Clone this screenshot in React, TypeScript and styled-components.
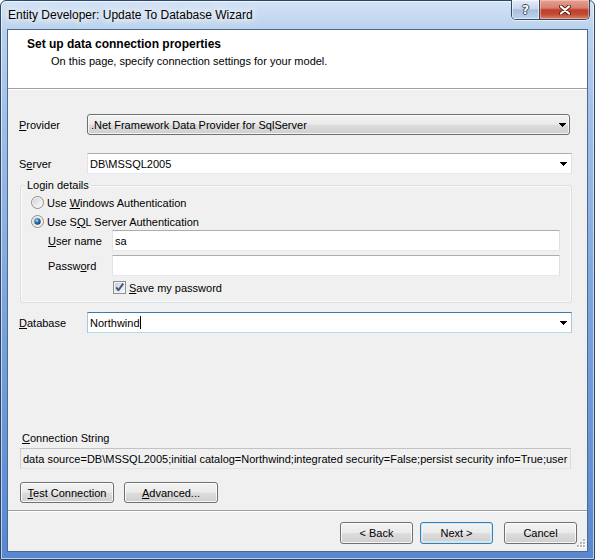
import React from "react";
import styled, { createGlobalStyle, css } from "styled-components";

const Global = createGlobalStyle`
  html, body { margin: 0; padding: 0; background: #ffffff; }
  body {
    font-family: "Liberation Sans", Arial, sans-serif;
    font-size: 11px;
    color: #000;
    overflow: hidden;
  }
  * { box-sizing: border-box; }
`;

const Window = styled.div`
  position: relative;
  width: 595px;
  height: 560px;
  display: flex;
  flex-direction: column;
  border: 1px solid #2b4566;
  border-radius: 6px 6px 0 0;
  background: linear-gradient(
    180deg,
    #d3e3f5 0px,
    #bbd2ed 28px,
    #a2c0e8 110px,
    #7ca5dd 300px,
    #5887cf 559px
  );
  box-shadow: inset 0 0 0 1px rgba(255, 255, 255, 0.6);
`;

const TitleBar = styled.div`
  height: 28px;
  display: flex;
  align-items: flex-start;
`;

const TitleText = styled.div`
  margin: 7px 0 0 7px;
  font-size: 12px;
  line-height: 15px;
  color: #000;
  text-shadow: 0 0 6px #fff, 0 0 10px #fff, 0 0 14px rgba(255, 255, 255, 0.9);
`;

const CaptionGroup = styled.div`
  margin: -1px 4px 0 auto;
  display: flex;
  height: 20px;
  border: 1px solid #34496a;
  border-top: none;
  border-radius: 0 0 5px 5px;
  overflow: hidden;
  box-shadow: 0 1px 0 rgba(255, 255, 255, 0.6);
`;

const CaptionButton = styled.div<{ $kind: "help" | "close" }>`
  display: flex;
  align-items: center;
  justify-content: center;
  height: 100%;
  ${(p) =>
    p.$kind === "help"
      ? css`
          width: 28px;
          border-right: 1px solid #34496a;
          background: linear-gradient(
            180deg,
            #e4ecf6 0%,
            #c9d7ea 45%,
            #a9bedc 52%,
            #bfd2ec 100%
          );
          box-shadow: inset 0 0 0 1px rgba(255, 255, 255, 0.55);
        `
      : css`
          width: 49px;
          background: linear-gradient(
            180deg,
            #e6a290 0%,
            #d6806f 42%,
            #c03f2b 52%,
            #c24a35 75%,
            #db866b 100%
          );
          box-shadow: inset 0 0 0 1px rgba(255, 220, 210, 0.45);
        `}
`;

const HelpGlyph = styled.span`
  font-family: "DejaVu Sans", sans-serif;
  font-weight: bold;
  font-size: 12px;
  line-height: 12px;
  color: #fff;
  text-shadow: -1px 0 0 #3a4c6a, 1px 0 0 #3a4c6a, 0 -1px 0 #3a4c6a,
    0 1px 0 #3a4c6a;
`;

const Client = styled.div`
  position: relative;
  flex: 1;
  margin: 0 6px 7px 6px;
  border: 1px solid #4a6a94;
  background: #f0f0f0;
  display: flex;
  flex-direction: column;
`;

const Header = styled.div`
  height: 59px;
  background: #ffffff;
  border-bottom: 1px solid #a0a0a0;
  padding: 7px 0 0 19px;
`;

const HeaderTitle = styled.div`
  font-weight: bold;
  font-size: 12px;
  line-height: 15px;
`;

const HeaderSub = styled.div`
  margin: 2px 0 0 24px;
  line-height: 14px;
`;

const Body = styled.div`
  flex: 1;
  display: flex;
  flex-direction: column;
  border-top: 1px solid #ffffff;
  padding: 24px 15px 7px 11px;
`;

const Row = styled.div<{ $mt?: number }>`
  display: flex;
  align-items: center;
  height: 21px;
  margin-top: ${(p) => p.$mt ?? 0}px;
`;

const FieldLabel = styled.div<{ $w: number }>`
  width: ${(p) => p.$w}px;
  flex: none;
  line-height: 14px;
  white-space: nowrap;
`;

const U = styled.span`
  text-decoration: underline;
  text-underline-offset: 1px;
`;

const editBorder = css`
  border: 1px solid;
  border-color: #abadb3 #dbdfe6 #e3e9ef #e2e3ea;
  background: #ffffff;
`;

const ComboBox = styled.div<{ $focused?: boolean; $mr?: number }>`
  flex: 1;
  height: 21px;
  margin-right: ${(p) => p.$mr ?? 0}px;
  display: flex;
  align-items: center;
  padding: 0 4px 0 2px;
  ${editBorder}
  ${(p) =>
    p.$focused &&
    css`
      border-color: #3d7bad #a4c9e3 #b7d9ed #a4c9e3;
    `}
`;

const DropList = styled.div<{ $mr?: number }>`
  flex: 1;
  height: 21px;
  margin-right: ${(p) => p.$mr ?? 0}px;
  display: flex;
  align-items: center;
  padding: 0 3px 0 3px;
  border: 1px solid #707070;
  border-radius: 3px;
  background: linear-gradient(
    180deg,
    #f2f2f2 0%,
    #ebebeb 48%,
    #dddddd 52%,
    #cfcfcf 100%
  );
  box-shadow: inset 0 0 0 1px rgba(255, 255, 255, 0.75);
`;

const ValueText = styled.div`
  flex: 1;
  line-height: 14px;
  white-space: nowrap;
  overflow: hidden;
`;

const Caret = styled.span`
  display: inline-block;
  width: 1px;
  height: 13px;
  background: #000;
  vertical-align: -2px;
`;

const Arrow = () => (
  <svg width="7" height="4" viewBox="0 0 7 4" shapeRendering="crispEdges">
    <rect x="0" y="0" width="7" height="1" fill="#000" />
    <rect x="1" y="1" width="5" height="1" fill="#000" />
    <rect x="2" y="2" width="3" height="1" fill="#000" />
    <rect x="3" y="3" width="1" height="1" fill="#000" />
  </svg>
);

const Group = styled.div`
  margin: 11px 0 0 1px;
  display: flex;
  flex-direction: column;
  border: 1px solid #d5dfe5;
  border-radius: 3px;
  padding: 0 11px 7px 10px;
  box-shadow: inset 0 0 0 1px rgba(255, 255, 255, 0.7);
`;

const Legend = styled.div`
  align-self: flex-start;
  margin: -8px 0 0 -6px;
  padding: 0 2px;
  line-height: 14px;
  background: #f0f0f0;
`;

const OptionRow = styled.div<{ $mt?: number; $ml?: number }>`
  display: flex;
  align-items: center;
  gap: 3px;
  height: 15px;
  margin-top: ${(p) => p.$mt ?? 0}px;
  margin-left: ${(p) => p.$ml ?? 0}px;
  line-height: 14px;
`;

const FieldRow = styled.div<{ $mt?: number }>`
  display: flex;
  align-items: center;
  height: 21px;
  margin: ${(p) => p.$mt ?? 0}px 0 0 17px;
`;

const TextBox = styled.div`
  flex: 1;
  height: 21px;
  display: flex;
  align-items: center;
  padding: 0 2px;
  line-height: 14px;
  ${editBorder}
`;

const Spacer = styled.div`
  flex: 1;
`;

const SectionLabel = styled.div`
  margin-left: 3px;
  line-height: 14px;
`;

const ReadOnlyBox = styled.div`
  margin: 3px 1px 0 1px;
  height: 21px;
  display: flex;
  align-items: center;
  padding: 0 2px;
  line-height: 14px;
  white-space: nowrap;
  overflow: hidden;
  background: #f0f0f0;
  border: 1px solid;
  border-color: #c3c3c3 #dadada #e2e2e2 #d0d0d0;
`;

const ButtonRow = styled.div<{ $mt?: number; $gap: number; $ml?: number }>`
  display: flex;
  gap: ${(p) => p.$gap}px;
  margin-top: ${(p) => p.$mt ?? 0}px;
  margin-left: ${(p) => p.$ml ?? 0}px;
`;

const Button = styled.div<{ $w: number; $h: number; $default?: boolean; $mr?: number }>`
  width: ${(p) => p.$w}px;
  height: ${(p) => p.$h}px;
  margin-right: ${(p) => p.$mr ?? 0}px;
  display: flex;
  align-items: center;
  justify-content: center;
  line-height: 14px;
  border: 1px solid #707070;
  border-radius: 3px;
  background: linear-gradient(
    180deg,
    #f2f2f2 0%,
    #ebebeb 48%,
    #dddddd 52%,
    #cfcfcf 100%
  );
  box-shadow: inset 0 0 0 1px rgba(255, 255, 255, 0.8);
  ${(p) =>
    p.$default &&
    css`
      border-color: #3c7fb1;
      box-shadow: inset 0 0 0 1px #c6e6f9, inset 0 0 0 2px rgba(255, 255, 255, 0.4);
    `}
`;

const Footer = styled.div`
  display: flex;
  justify-content: flex-end;
  border-top: 1px solid #a0a0a0;
  box-shadow: inset 0 1px 0 #ffffff;
  padding: 11px 10px 7px 10px;
`;

const Grip = styled.div`
  position: absolute;
  right: 1px;
  bottom: 1px;
  width: 11px;
  height: 11px;
  display: flex;
`;

const RadioIcon = ({ checked }: { checked?: boolean }) => (
  <svg width="13" height="13" viewBox="0 0 13 13">
    <defs>
      <linearGradient id="rbg" x1="0" y1="0" x2="1" y2="1">
        <stop offset="0" stopColor="#d2d2d2" />
        <stop offset="1" stopColor="#fbfbfb" />
      </linearGradient>
      <radialGradient id="rdot" cx="0.4" cy="0.35" r="0.75">
        <stop offset="0" stopColor="#b4e0fb" />
        <stop offset="0.45" stopColor="#2f6eae" />
        <stop offset="1" stopColor="#0c3565" />
      </radialGradient>
    </defs>
    <circle cx="6.5" cy="6.5" r="6" fill="#f5f5f5" stroke="#8b8c8c" />
    <circle cx="6.5" cy="6.5" r="4.6" fill="url(#rbg)" />
    {checked && <circle cx="6.5" cy="6.5" r="3.2" fill="url(#rdot)" />}
  </svg>
);

const CheckIcon = () => (
  <svg width="13" height="13" viewBox="0 0 13 13">
    <defs>
      <linearGradient id="cbg" x1="0" y1="0" x2="1" y2="1">
        <stop offset="0" stopColor="#cbcfd5" />
        <stop offset="1" stopColor="#f6f6f6" />
      </linearGradient>
    </defs>
    <rect x="0.5" y="0.5" width="12" height="12" fill="#f4f4f4" stroke="#8e8f8f" />
    <rect x="2" y="2" width="9" height="9" fill="url(#cbg)" />
    <path
      d="M3.2 6.4 L5.4 9.2 L10.2 2.6"
      stroke="#3b5486"
      strokeWidth="1.9"
      fill="none"
      strokeLinejoin="round"
    />
  </svg>
);

const CloseGlyph = () => (
  <svg width="12" height="10" viewBox="0 0 12 10">
    <path d="M2 1.5 L10 8.5 M10 1.5 L2 8.5" stroke="#5a2118" strokeWidth="4" strokeLinecap="round" />
    <path d="M2 1.5 L10 8.5 M10 1.5 L2 8.5" stroke="#ffffff" strokeWidth="2.2" strokeLinecap="round" />
  </svg>
);

const GripIcon = () => (
  <svg width="11" height="11" viewBox="0 0 11 11" shapeRendering="crispEdges">
    {[
      [8, 0],
      [5, 3],
      [8, 3],
      [2, 6],
      [5, 6],
      [8, 6],
    ].map(([x, y], i) => (
      <g key={i}>
        <rect x={x + 1} y={y + 1} width="2" height="2" fill="#ffffff" />
        <rect x={x} y={y} width="2" height="2" fill="#b8b8b8" />
      </g>
    ))}
  </svg>
);

export default function App() {
  return (
    <>
      <Global />
      <Window>
        <TitleBar>
          <TitleText>Entity Developer: Update To Database Wizard</TitleText>
          <CaptionGroup>
            <CaptionButton $kind="help">
              <HelpGlyph>?</HelpGlyph>
            </CaptionButton>
            <CaptionButton $kind="close">
              <CloseGlyph />
            </CaptionButton>
          </CaptionGroup>
        </TitleBar>
        <Client>
          <Header>
            <HeaderTitle>Set up data connection properties</HeaderTitle>
            <HeaderSub>On this page, specify connection settings for your model.</HeaderSub>
          </Header>
          <Body>
            <Row>
              <FieldLabel $w={68}>
                <U>P</U>rovider
              </FieldLabel>
              <DropList $mr={2}>
                <ValueText>.Net Framework Data Provider for SqlServer</ValueText>
                <Arrow />
              </DropList>
            </Row>
            <Row $mt={18}>
              <FieldLabel $w={68}>
                S<U>e</U>rver
              </FieldLabel>
              <ComboBox>
                <ValueText>DB\MSSQL2005</ValueText>
                <Arrow />
              </ComboBox>
            </Row>
            <Group>
              <Legend>Login details</Legend>
              <OptionRow $mt={3}>
                <RadioIcon />
                <span>
                  Use <U>W</U>indows Authentication
                </span>
              </OptionRow>
              <OptionRow $mt={4}>
                <RadioIcon checked />
                <span>
                  Use S<U>Q</U>L Server Authentication
                </span>
              </OptionRow>
              <FieldRow $mt={1}>
                <FieldLabel $w={64}>
                  <U>U</U>ser name
                </FieldLabel>
                <TextBox>sa</TextBox>
              </FieldRow>
              <FieldRow $mt={4}>
                <FieldLabel $w={64}>
                  Passw<U>o</U>rd
                </FieldLabel>
                <TextBox />
              </FieldRow>
              <OptionRow $mt={4} $ml={82}>
                <CheckIcon />
                <span>
                  <U>S</U>ave my password
                </span>
              </OptionRow>
            </Group>
            <Row $mt={9}>
              <FieldLabel $w={68}>
                <U>D</U>atabase
              </FieldLabel>
              <ComboBox $focused>
                <ValueText>
                  Northwind
                  <Caret />
                </ValueText>
                <Arrow />
              </ComboBox>
            </Row>
            <Spacer />
            <SectionLabel>
              <U>C</U>onnection String
            </SectionLabel>
            <ReadOnlyBox>
              data source=DB\MSSQL2005;initial catalog=Northwind;integrated security=False;persist security info=True;user
            </ReadOnlyBox>
            <ButtonRow $mt={13} $gap={10} $ml={1}>
              <Button $w={94} $h={21}>
                <span>
                  <U>T</U>est Connection
                </span>
              </Button>
              <Button $w={94} $h={21}>
                <span>
                  <U>A</U>dvanced...
                </span>
              </Button>
            </ButtonRow>
          </Body>
          <Footer>
            <Button $w={73} $h={22} $mr={7}>
              &lt; Back
            </Button>
            <Button $w={73} $h={22} $mr={11} $default>
              Next &gt;
            </Button>
            <Button $w={73} $h={22}>
              Cancel
            </Button>
          </Footer>
          <Grip>
            <GripIcon />
          </Grip>
        </Client>
      </Window>
    </>
  );
}
